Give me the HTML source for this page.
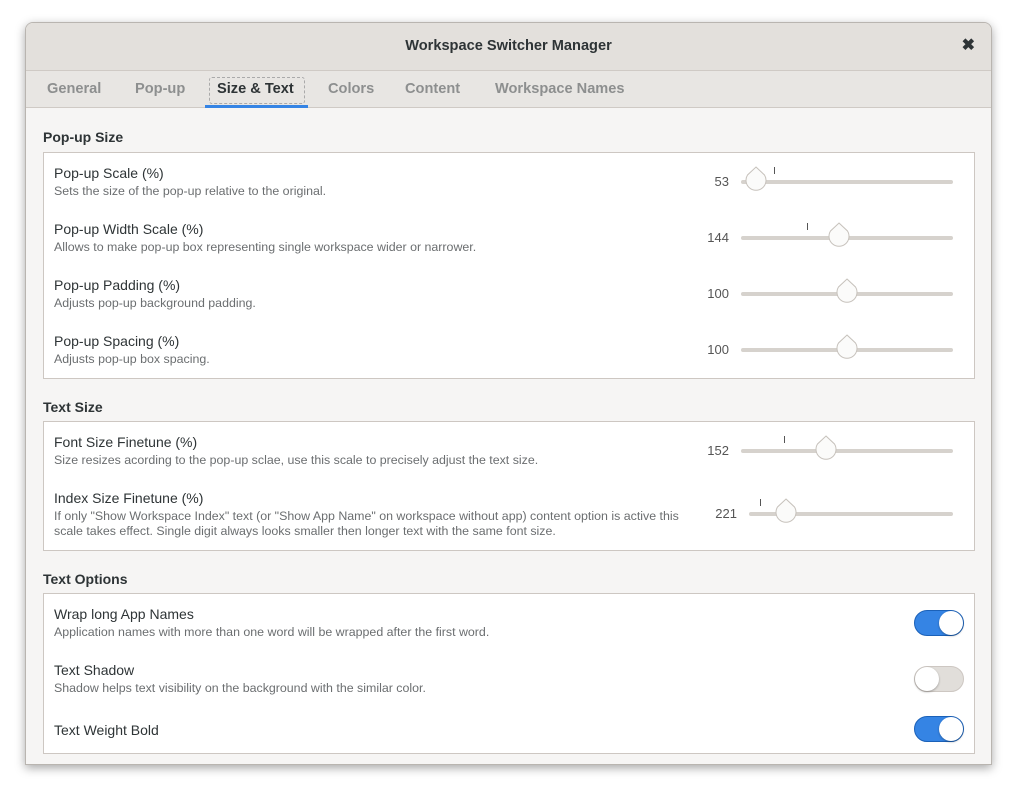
<!DOCTYPE html>
<html><head><meta charset="utf-8"><style>
*{margin:0;padding:0;box-sizing:border-box}
body{width:1018px;height:794px;background:#fff;font-family:"Liberation Sans",sans-serif;position:relative;overflow:hidden}
.win{position:absolute;left:25px;top:22px;width:967px;height:743px;background:#f6f5f4;border:1px solid #b9b5b0;border-radius:8px 8px 0 0;box-shadow:0 3px 10px rgba(0,0,0,.35);overflow:hidden}
.hdr{position:absolute;left:0;top:0;width:100%;height:48px;background:#e3e0dc;border-bottom:1px solid #cfcac5}
.title{position:absolute;left:0;width:100%;top:15px;text-align:center;font-weight:bold;font-size:14.6px;color:#2e3436}
.close{position:absolute;right:16px;top:12px;font-size:16px;font-weight:bold;color:#2e3436}
.tabs{position:absolute;left:0;top:48px;width:100%;height:37px;background:#e8e6e3;border-bottom:1px solid #cfcac5}
.tab{position:absolute;top:10px;font-size:14.6px;font-weight:bold;color:#8d8f8f}
.a{position:absolute}
.h{font-size:14px;font-weight:bold;color:#2e3436}
.frame{position:absolute;left:17px;width:932px;background:#fff;border:1px solid #cdc7c2}
.t{position:absolute;left:10px;font-size:14px;color:#2e3436}
.d{position:absolute;left:10px;font-size:12.4px;color:#6b6e70;line-height:15px}
.v{position:absolute;font-size:13px;color:#555;text-align:right;width:40px}
.tr{position:absolute;height:4px;background:#d6d2cd;border-radius:2px}
.tk{position:absolute;width:1px;height:7px;background:#555}
.th{position:absolute;width:22px;height:27px}
.sw{position:absolute;left:870px;width:50px;height:26px;border-radius:13px;background:#3584e4;border:1px solid #1b61b8}
.sw.off{background:#e1deda;border-color:#cdc7c2}
.sw i{position:absolute;top:0;right:0;width:24px;height:24px;border-radius:50%;background:#fff;box-shadow:0 1px 2px rgba(0,0,0,.3)}
.sw.off i{left:0;right:auto}
</style></head><body>
<div class="win">
<div class="hdr"><div class="title">Workspace Switcher Manager</div><div class="close">✖</div></div>
<div class="tabs">
<div class="tab" style="left:21px">General</div>
<div class="tab" style="left:109px">Pop-up</div>
<div class="a" style="left:183px;top:6px;width:96px;height:27px;border:1px dashed #aaa;border-radius:3px"></div>
<div class="tab" style="left:191px;color:#2e3436">Size &amp; Text</div>
<div class="a" style="left:179px;top:34px;width:103px;height:3px;background:#3584e4"></div>
<div class="tab" style="left:302px">Colors</div>
<div class="tab" style="left:379px">Content</div>
<div class="tab" style="left:469px">Workspace Names</div>
</div>

<div class="a h" style="left:17px;top:106px">Pop-up Size</div>
<div class="frame" style="top:129px;height:227px">
<div class="t" style="top:12px">Pop-up Scale (%)</div>
<div class="d" style="top:31px">Sets the size of the pop-up relative to the original.</div>
<div class="t" style="top:68px">Pop-up Width Scale (%)</div>
<div class="d" style="top:87px">Allows to make pop-up box representing single workspace wider or narrower.</div>
<div class="t" style="top:124px">Pop-up Padding (%)</div>
<div class="d" style="top:143px">Adjusts pop-up background padding.</div>
<div class="t" style="top:180px">Pop-up Spacing (%)</div>
<div class="d" style="top:199px">Adjusts pop-up box spacing.</div>

<div class="v" style="left:645px;top:21px">53</div>
<div class="tr" style="left:697px;top:27px;width:212px"></div>
<div class="tk" style="left:730px;top:14px"></div>
<svg class="th" style="left:701px;top:12px" viewBox="0 0 22 27"><path d="M11 2 L19.5 10 A10 10 0 1 1 2.5 10 Z" fill="#fbfbfa" stroke="#c6c1bb"/></svg>

<div class="v" style="left:645px;top:77px">144</div>
<div class="tr" style="left:697px;top:83px;width:212px"></div>
<div class="tk" style="left:763px;top:70px"></div>
<svg class="th" style="left:784px;top:68px" viewBox="0 0 22 27"><path d="M11 2 L19.5 10 A10 10 0 1 1 2.5 10 Z" fill="#fbfbfa" stroke="#c6c1bb"/></svg>

<div class="v" style="left:645px;top:133px">100</div>
<div class="tr" style="left:697px;top:139px;width:212px"></div>
<svg class="th" style="left:792px;top:124px" viewBox="0 0 22 27"><path d="M11 2 L19.5 10 A10 10 0 1 1 2.5 10 Z" fill="#fbfbfa" stroke="#c6c1bb"/></svg>

<div class="v" style="left:645px;top:189px">100</div>
<div class="tr" style="left:697px;top:195px;width:212px"></div>
<svg class="th" style="left:792px;top:180px" viewBox="0 0 22 27"><path d="M11 2 L19.5 10 A10 10 0 1 1 2.5 10 Z" fill="#fbfbfa" stroke="#c6c1bb"/></svg>
</div>

<div class="a h" style="left:17px;top:376px">Text Size</div>
<div class="frame" style="top:398px;height:130px">
<div class="t" style="top:12px">Font Size Finetune (%)</div>
<div class="d" style="top:31px">Size resizes acording to the pop-up sclae, use this scale to precisely adjust the text size.</div>
<div class="t" style="top:68px">Index Size Finetune (%)</div>
<div class="d" style="top:87px">If only "Show Workspace Index" text (or "Show App Name" on workspace without app) content option is active this<br>scale takes effect. Single digit always looks smaller then longer text with the same font size.</div>

<div class="v" style="left:645px;top:21px">152</div>
<div class="tr" style="left:697px;top:27px;width:212px"></div>
<div class="tk" style="left:740px;top:14px"></div>
<svg class="th" style="left:771px;top:12px" viewBox="0 0 22 27"><path d="M11 2 L19.5 10 A10 10 0 1 1 2.5 10 Z" fill="#fbfbfa" stroke="#c6c1bb"/></svg>

<div class="v" style="left:653px;top:84px">221</div>
<div class="tr" style="left:705px;top:90px;width:204px"></div>
<div class="tk" style="left:716px;top:77px"></div>
<svg class="th" style="left:731px;top:75px" viewBox="0 0 22 27"><path d="M11 2 L19.5 10 A10 10 0 1 1 2.5 10 Z" fill="#fbfbfa" stroke="#c6c1bb"/></svg>
</div>

<div class="a h" style="left:17px;top:548px">Text Options</div>
<div class="frame" style="top:570px;height:161px">
<div class="t" style="top:12px">Wrap long App Names</div>
<div class="d" style="top:31px">Application names with more than one word will be wrapped after the first word.</div>
<div class="t" style="top:68px">Text Shadow</div>
<div class="d" style="top:87px">Shadow helps text visibility on the background with the similar color.</div>
<div class="t" style="top:128px">Text Weight Bold</div>
<div class="sw" style="top:16px"><i></i></div>
<div class="sw off" style="top:72px"><i></i></div>
<div class="sw" style="top:122px"><i></i></div>
</div>
</div>
</body></html>
